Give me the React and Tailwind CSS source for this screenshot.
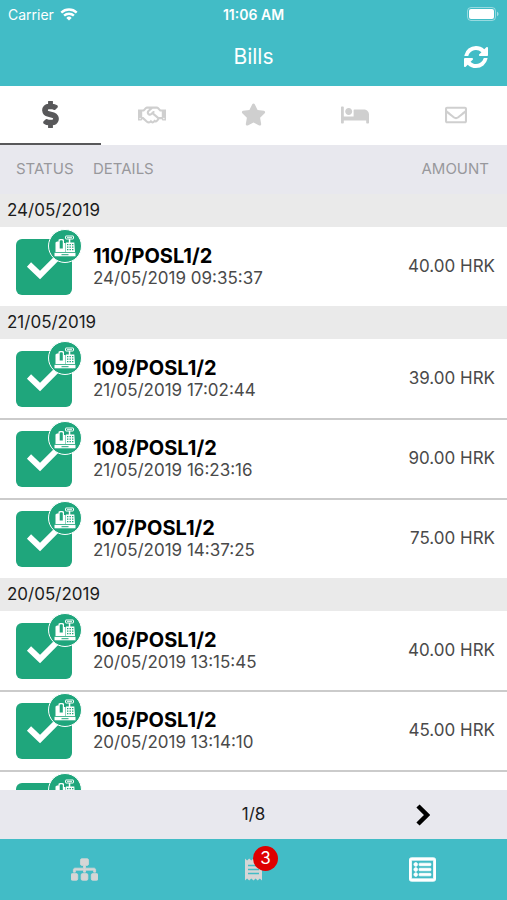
import React from 'react';
import {
  FaBed,
  FaDollarSign,
  FaRegEnvelope,
  FaRegHandshake,
  FaRegListAlt,
  FaSitemap,
  FaStar,
} from 'react-icons/fa';

const tabs = [
  { id: 'bills', label: 'Bills', icon: <FaDollarSign size={27} stroke="currentColor" strokeWidth={28} />, active: true },
  { id: 'deals', label: 'Deals', icon: <FaRegHandshake size={28} /> },
  { id: 'favorites', label: 'Favorites', icon: <FaStar size={25} /> },
  { id: 'rooms', label: 'Rooms', icon: <FaBed size={28} /> },
  { id: 'messages', label: 'Messages', icon: <FaRegEnvelope size={22} /> },
];

const groups = [
  {
    date: '24/05/2019',
    bills: [{ number: '110/POSL1/2', time: '09:35:37', amount: '40.00 HRK' }],
  },
  {
    date: '21/05/2019',
    bills: [
      { number: '109/POSL1/2', time: '17:02:44', amount: '39.00 HRK' },
      { number: '108/POSL1/2', time: '16:23:16', amount: '90.00 HRK' },
      { number: '107/POSL1/2', time: '14:37:25', amount: '75.00 HRK' },
    ],
  },
  {
    date: '20/05/2019',
    bills: [
      { number: '106/POSL1/2', time: '13:15:45', amount: '40.00 HRK' },
      { number: '105/POSL1/2', time: '13:14:10', amount: '45.00 HRK' },
      {},
    ],
  },
];

function WifiIcon() {
  return (
    <svg width="18" height="13" viewBox="0 0 18 13" fill="none" stroke="white" strokeWidth="2.4" aria-hidden="true">
      <path d="M1.300 4.700a11 11 0 0 1 15.400 0" />
      <path d="M4.100 7.700a7 7 0 0 1 9.800 0" />
      <path d="M9 12.600 6.300 9.900a3.900 3.900 0 0 1 5.400 0z" fill="white" stroke="none" />
    </svg>
  );
}

function BatteryIcon() {
  return (
    <svg width="32" height="14" viewBox="0 0 32 14" aria-hidden="true">
      <rect x="0.5" y="0.5" width="28" height="13" rx="3.5" fill="none" stroke="white" strokeOpacity="0.45" />
      <rect x="2" y="2" width="25" height="10" rx="2" fill="white" />
      <path d="M30 4.800v4.400c1-.4 1.500-1.200 1.500-2.200S31 5.200 30 4.800z" fill="white" fillOpacity="0.5" />
    </svg>
  );
}

function RefreshIcon() {
  return (
    <svg width="24" height="24" viewBox="0 64 1536 1536" fill="currentColor" aria-hidden="true">
      <path d="M1511 928q0 5-1 7-64 268-268 434.500t-478 166.500q-146 0-282.500-55t-243.500-157l-129 129q-19 19-45 19t-45-19-19-45v-448q0-26 19-45t45-19h448q26 0 45 19t19 45-19 45l-137 137q71 66 161 102t187 36q134 0 250-65t186-179q11-17 53-117 8-23 30-23h192q13 0 22.500 9.500t9.500 22.500zm25-672v448q0 26-19 45t-45 19h-448q-26 0-45-19t-19-45 19-45l138-138q-148-137-349-137-134 0-250 65t-186 179q-11 17-53 117-8 23-30 23H50q-13 0-22.500-9.500T18 736v-7q65-268 270-434.500T768 128q146 0 284 55.500t245 156.500l130-129q19-19 45-19t45 19 19 45z" />
    </svg>
  );
}

function ReceiptIcon() {
  return (
    <svg width="17" height="23" viewBox="0 0 17 23" aria-hidden="true">
      <path
        d="M0 0.500 2.100 2.500 4.200 0.500 6.300 2.500 8.500 0.500 10.600 2.500 12.700 0.500 14.800 2.500 17 0.500V22.500L14.800 20.500 12.700 22.500 10.600 20.500 8.500 22.500 6.300 20.500 4.200 22.500 2.100 20.500 0 22.500z"
        fill="currentColor"
      />
      <path d="M3 7.500h11M3 11.500h11M3 15.500h11" stroke="#42bcc6" strokeWidth="1.500" />
    </svg>
  );
}

function RegisterIcon() {
  return (
    <svg width="32" height="32" viewBox="0 0 32 32" aria-hidden="true">
      <path d="M6.500 12.500 8 11.500h1.500V10c0-1.300 5.500-1.300 5.500 0v3h1.500v9h-10z" fill="white" />
      <path d="M10.700 10.800c0-.9 3.100-.9 3.100 0v7.700h-3.100z" fill="#1fa67c" />
      <rect x="16.500" y="6" width="8" height="3" rx="0.500" fill="none" stroke="white" />
      <path d="M18 7.500h5" stroke="white" strokeWidth="0.800" />
      <path d="M19.800 9h1.500v3.500h4L26 22h-9v-9.500h2.800z" fill="white" />
      <path
        d="M18 14h1.400v1.300H18zM20.500 14h1.400v1.300h-1.400zM23 14h1.400v1.300H23zM18 16.500h1.400v1.300H18zM20.500 16.500h1.400v1.300h-1.400zM23 16.500h1.400v1.300H23zM18 19h1.400v1.300H18zM20.500 19h1.400v1.300h-1.400zM23 19h1.400v1.300H23z"
        fill="#1fa67c"
      />
      <path d="M5.500 22.800h21v3.500h-21z" fill="white" />
      <path d="M12.500 24.200h7v1h-7z" fill="#1fa67c" />
    </svg>
  );
}

function StatusTile() {
  return (
    <div className="relative size-14 rounded-md bg-[#1fa67c]">
      <svg className="size-14" viewBox="0 0 56 56" fill="none" role="img" aria-label="Paid">
        <path d="M13 25.500 24 36 45 15" stroke="white" strokeWidth="6" />
      </svg>
      <span className="absolute -top-2.5 -right-2.5 flex size-[34px] items-center justify-center rounded-full border border-white bg-[#1fa67c]">
        <RegisterIcon />
      </span>
    </div>
  );
}

function BillRow({ bill, date }) {
  return (
    <tr className="h-20 border-b-2 border-[#cbcbcb] last:h-[79px] last:border-b-0">
      <td className="w-[93px] pl-4">
        <StatusTile />
      </td>
      <td>
        {bill.number && (
          <>
            <div className="text-[20px] leading-[22px] font-bold text-black">{bill.number}</div>
            <div className="text-[17px] leading-[22px] text-[#4a4a4a]">
              {date} {bill.time}
            </div>
          </>
        )}
      </td>
      <td className="pr-3 text-right text-[17px] text-[#4a4a4a]">{bill.amount}</td>
    </tr>
  );
}

export default function App() {
  return (
    <div className="flex h-screen flex-col overflow-hidden bg-white font-['Inter','Liberation_Sans',sans-serif]">
      <header className="shrink-0 bg-[#42bcc6] text-white">
        <div className="grid h-7 grid-cols-3 items-center px-2 text-[14px]">
          <div className="flex items-center gap-1.5">
            Carrier <WifiIcon />
          </div>
          <div className="text-center font-semibold">11:06 AM</div>
          <div className="flex justify-end">
            <BatteryIcon />
          </div>
        </div>
        <div className="grid h-[58px] grid-cols-3 items-center px-[19px]">
          <h1 className="col-start-2 text-center text-[21px]">Bills</h1>
          <button type="button" aria-label="Refresh" className="justify-self-end">
            <RefreshIcon />
          </button>
        </div>
      </header>

      <nav className="grid h-[59px] shrink-0 grid-cols-5">
        {tabs.map((tab) => (
          <button
            key={tab.id}
            type="button"
            aria-label={tab.label}
            className={
              tab.active
                ? 'flex items-center justify-center border-b-2 border-[#58585a] text-[#58585a]'
                : 'flex items-center justify-center border-b-2 border-transparent text-[#cfcfcf]'
            }
          >
            {tab.icon}
          </button>
        ))}
      </nav>

      <main className="min-h-0 flex-1 overflow-hidden">
        <table className="w-full border-collapse">
          <thead>
            <tr className="h-[49px] bg-[#e8e8ee] text-[15px] text-[#98989c]">
              <th scope="col" className="pl-4 text-left font-normal">STATUS</th>
              <th scope="col" className="text-left font-normal">DETAILS</th>
              <th scope="col" className="pr-[18px] text-right font-normal">AMOUNT</th>
            </tr>
          </thead>
          {groups.map((group) => (
            <tbody key={group.date}>
              <tr className="h-[33px] bg-[#eaeaea]">
                <th scope="rowgroup" colSpan={3} className="pl-[7px] text-left text-[17px] font-normal text-[#1c1c1c]">
                  {group.date}
                </th>
              </tr>
              {group.bills.map((bill, index) => (
                <BillRow key={index} bill={bill} date={group.date} />
              ))}
            </tbody>
          ))}
        </table>
      </main>

      <div className="grid h-[49px] shrink-0 grid-cols-3 items-center bg-[#e8e8ee]">
        <span className="col-start-2 text-center text-[17px] text-[#1c1c1c]">1/8</span>
        <button type="button" aria-label="Next page" className="justify-self-center">
          <svg width="14" height="22" viewBox="0 0 14 22" fill="none" stroke="black" strokeWidth="4.5" aria-hidden="true">
            <path d="M2 2 11 11 2 20" />
          </svg>
        </button>
      </div>

      <footer className="grid h-[61px] shrink-0 grid-cols-3 bg-[#42bcc6] text-[#d6d6d6]">
        <button type="button" aria-label="Structure" className="flex items-center justify-center">
          <FaSitemap size={27} stroke="currentColor" strokeWidth={18} />
        </button>
        <button type="button" aria-label="Receipts" className="flex items-center justify-center">
          <span className="relative">
            <ReceiptIcon />
            <span className="absolute -top-3 left-2 flex size-[25px] items-center justify-center rounded-full bg-[#de0000] text-[17px] text-white">
              3
            </span>
          </span>
        </button>
        <button type="button" aria-label="List" className="flex items-center justify-center text-white">
          <FaRegListAlt size={27} stroke="currentColor" strokeWidth={14} />
        </button>
      </footer>
    </div>
  );
}
